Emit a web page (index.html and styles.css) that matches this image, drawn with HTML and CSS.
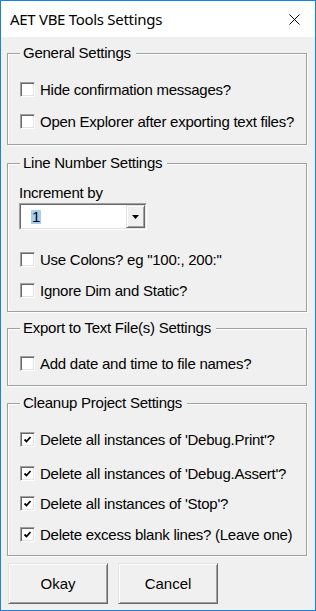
FILE: index.html
```html
<!DOCTYPE html>
<html>
<head>
<meta charset="utf-8">
<link rel="stylesheet" href="styles.css">
</head>
<body>
<div class="window">
  <div class="titlebar">
    <span class="title">AET VBE Tools Settings</span>
    <svg class="close" width="11" height="11" viewBox="0 0 11 11"><path d="M0.5 0.5 L10.5 10.5 M10.5 0.5 L0.5 10.5" stroke="#000" stroke-width="1" fill="none"/></svg>
  </div>
  <div class="client">
    <fieldset class="group g-general">
      <legend>General Settings</legend>
      <label class="check"><span class="box"></span>Hide confirmation messages?</label>
      <label class="check next"><span class="box"></span>Open Explorer after exporting text files?</label>
    </fieldset>

    <fieldset class="group g-line">
      <legend>Line Number Settings</legend>
      <div class="field-label">Increment by</div>
      <div class="combo">
        <div class="combo-inner">
          <div class="combo-text"><span class="sel">1</span></div>
          <div class="combo-btn"><svg width="7" height="4" viewBox="0 0 7 4"><path d="M0 0H7L3.5 4Z" fill="#000"/></svg></div>
        </div>
      </div>
      <label class="check after-combo"><span class="box"></span>Use Colons? eg "100:, 200:"</label>
      <label class="check next-md"><span class="box"></span>Ignore Dim and Static?</label>
    </fieldset>

    <fieldset class="group g-export">
      <legend>Export to Text File(s) Settings</legend>
      <label class="check"><span class="box"></span>Add date and time to file names?</label>
    </fieldset>

    <fieldset class="group g-cleanup">
      <legend>Cleanup Project Settings</legend>
      <label class="check"><span class="box checked"><svg width="9" height="9" viewBox="0 0 9 9"><path d="M1.5 4.5 L3.5 6.5 L7.5 2" stroke="#000" stroke-width="1.8" fill="none"/></svg></span>Delete all instances of 'Debug.Print'?</label>
      <label class="check next-lg"><span class="box checked"><svg width="9" height="9" viewBox="0 0 9 9"><path d="M1.5 4.5 L3.5 6.5 L7.5 2" stroke="#000" stroke-width="1.8" fill="none"/></svg></span>Delete all instances of 'Debug.Assert'?</label>
      <label class="check next-sm"><span class="box checked"><svg width="9" height="9" viewBox="0 0 9 9"><path d="M1.5 4.5 L3.5 6.5 L7.5 2" stroke="#000" stroke-width="1.8" fill="none"/></svg></span>Delete all instances of 'Stop'?</label>
      <label class="check next-md"><span class="box checked"><svg width="9" height="9" viewBox="0 0 9 9"><path d="M1.5 4.5 L3.5 6.5 L7.5 2" stroke="#000" stroke-width="1.8" fill="none"/></svg></span>Delete excess blank lines? (Leave one)</label>
    </fieldset>

    <div class="buttons">
      <button class="btn">Okay</button>
      <button class="btn">Cancel</button>
    </div>
  </div>
</div>
</body>
</html>
```
FILE: styles.css
```css
* { box-sizing: border-box; }
html, body { margin: 0; padding: 0; background: #fff; }
body { font-family: "Liberation Sans", Arial, sans-serif; color: #000; }

.window {
  width: 316px;
  height: 611px;
  border: 1px solid #1883d7;
  display: flex;
  flex-direction: column;
  background: #f0f0f0;
}

.titlebar {
  height: 36px;
  flex: none;
  background: #fff;
  display: flex;
  align-items: center;
  justify-content: space-between;
  padding: 0 15px 0 9px;
}
.title {
  font-family: "Noto Sans", "Open Sans", sans-serif;
  font-size: 15px;
  line-height: 20px;
  letter-spacing: -0.3px;
}
.close { display: block; }

.client {
  flex: 1;
  display: flex;
  flex-direction: column;
  padding: 8px 8px 0 6px;
}

.group {
  margin: 0;
  padding: 0 12px;
  min-width: 0;
  border: 1px solid #a0a0a0;
  box-shadow: inset 1px 1px #fff, 1px 1px #fff;
  display: flex;
  flex-direction: column;
  align-items: flex-start;
  letter-spacing: -0.25px;
}
.group legend {
  font-size: 15px;
  line-height: 16px;
  padding: 0 5px 0 3px;
  background: #f0f0f0;
}
.g-general { padding-top: 21px; padding-bottom: 15px; }
.g-line { margin-top: 10px; padding-top: 14px; padding-bottom: 13px; }
.g-export { margin-top: 8px; padding-top: 20px; padding-bottom: 14px; }
.g-cleanup { margin-top: 9px; padding-top: 21px; padding-bottom: 13px; }

.check {
  display: flex;
  align-items: center;
  gap: 5px;
  height: 15px;
  font-size: 15px;
  line-height: 15px;
  white-space: nowrap;
}
.check.next { margin-top: 17px; }
.check.next-md { margin-top: 16px; }
.check.next-lg { margin-top: 19px; }
.check.next-sm { margin-top: 15px; }
.check.after-combo { margin-top: 22px; }

.box {
  flex: none;
  width: 15px;
  height: 15px;
  background: #fff;
  border: 1px solid;
  border-color: #a0a0a0 #fff #fff #a0a0a0;
  box-shadow: inset 1px 1px #696969, inset -1px -1px #e3e3e3;
  display: flex;
  align-items: center;
  justify-content: center;
}
.box svg { display: block; }

.field-label {
  font-size: 15px;
  line-height: 15px;
  margin-left: -1px;
}

.combo {
  margin-top: 3px;
  margin-left: -1px;
  width: 128px;
  height: 27px;
  border: 1px solid;
  border-color: #a0a0a0 #fff #fff #a0a0a0;
}
.combo-inner {
  height: 100%;
  display: flex;
  border: 1px solid;
  border-color: #696969 #e3e3e3 #e3e3e3 #696969;
  background: #fff;
}
.combo-text {
  flex: 1;
  display: flex;
  align-items: center;
  padding-left: 10px;
}
.sel {
  background: #a8cff2;
  font-size: 15px;
  line-height: 14px;
  padding: 0 1px;
}
.combo-btn {
  width: 19px;
  flex: none;
  background: #f0f0f0;
  border: 1px solid;
  border-color: #e3e3e3 #696969 #696969 #e3e3e3;
  box-shadow: inset 1px 1px #fff, inset -1px -1px #a0a0a0;
  display: flex;
  align-items: center;
  justify-content: center;
}
.combo-btn svg { display: block; }

.buttons {
  margin-top: 7px;
  display: flex;
  gap: 10px;
  padding-left: 1px;
}
.btn {
  width: 100px;
  height: 41px;
  padding: 0;
  font-family: "Liberation Sans", Arial, sans-serif;
  font-size: 15px;
  color: #000;
  background: #f0f0f0;
  border: 1px solid;
  border-color: #e3e3e3 #696969 #696969 #e3e3e3;
  box-shadow: inset 1px 1px #fff, inset -1px -1px #a0a0a0;
}
```
